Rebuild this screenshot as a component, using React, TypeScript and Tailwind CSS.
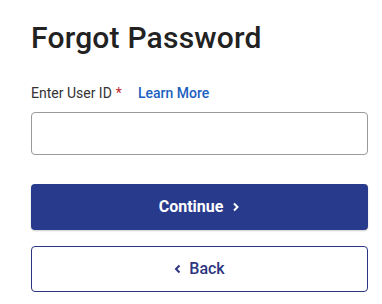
import React from "react";

export default function App() {
  return (
    <div className="w-[382px] h-[304px] bg-white pl-[31px] pr-[14px] pt-[20px] font-['Roboto',sans-serif]">
      <h1 className="text-[30px] leading-[36px] font-medium text-[#222222] tracking-[0.2px]">Forgot Password</h1>
      <div className="mt-[28px] flex items-center text-[14px] leading-[18px]">
        <span className="text-[#333333]">Enter User ID</span>
        <span className="text-[#c0272d] ml-[4px]">*</span>
        <a className="ml-[16px] text-[#1d5fbf] font-medium">Learn More</a>
      </div>
      <input
        className="mt-[10px] block w-[337px] h-[43px] rounded-[4px] border border-[#9a9a9a] bg-white px-3 outline-none"
        type="text"
      />
      <button className="mt-[29px] flex w-[337px] h-[46px] items-center justify-center gap-[9px] rounded-[4px] bg-[#283a8c] text-white text-[16px] font-bold shadow-[0_1px_2px_rgba(0,0,0,0.2)]">
        <span>Continue</span>
        <svg width="8" height="10" viewBox="0 0 8 10" fill="none">
          <path d="M2 1.5L5.5 5L2 8.5" stroke="white" strokeWidth="2" />
        </svg>
      </button>
      <button className="mt-[16px] flex w-[337px] h-[46px] items-center justify-center gap-[7px] rounded-[4px] border border-[#2b3580] bg-white text-[#2b3580] text-[16px] font-medium">
        <svg width="8" height="10" viewBox="0 0 8 10" fill="none">
          <path d="M5.5 1.5L2 5L5.5 8.5" stroke="#2b3580" strokeWidth="2" />
        </svg>
        <span>Back</span>
      </button>
    </div>
  );
}
